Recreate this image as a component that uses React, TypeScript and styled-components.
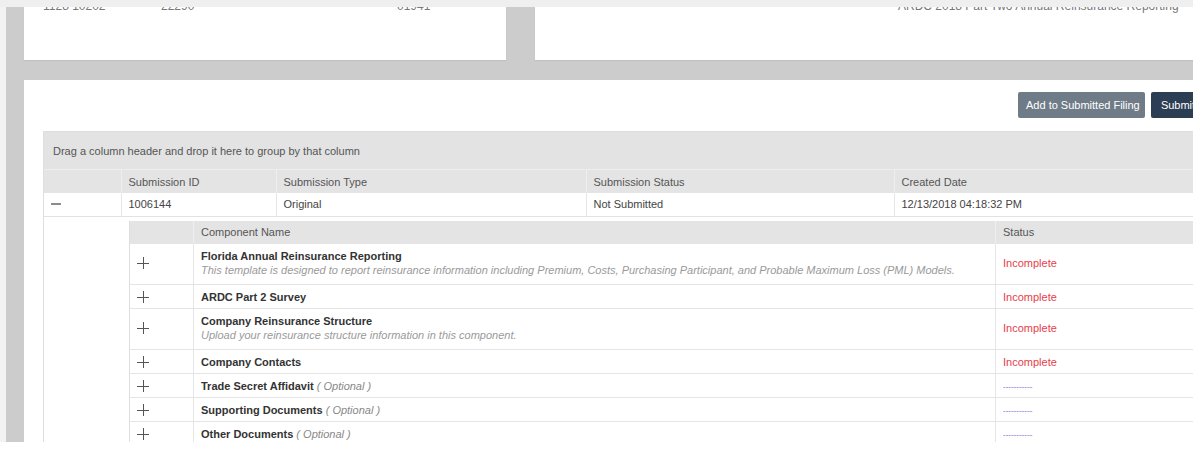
import styled, { createGlobalStyle } from "styled-components";

const GlobalStyle = createGlobalStyle`
  html, body {
    margin: 0;
    padding: 0;
    background: #ffffff;
    overflow: hidden;
  }
  body {
    font-family: "Liberation Sans", Arial, sans-serif;
    font-size: 11px;
    color: #444;
  }
`

const Page = styled.div`
  width: 1193px;
  height: 454px;
  overflow: hidden;
  background: #ffffff;
`

const TopBar = styled.div`
  height: 7px;
  background: #efefef;
`

const Shell = styled.div`
  display: flex;
  height: 435px;
  overflow: hidden;
`

const Gutter = styled.div`
  flex: none;
  width: 6px;
  background: #f3f3f3;
`

const Stage = styled.div`
  flex: none;
  width: 1218px;
  padding-left: 18px;
  box-sizing: border-box;
  background: #cccccc;
  display: flex;
  flex-direction: column;
  gap: 20px;
`

const CardRow = styled.div`
  flex: none;
  display: grid;
  grid-template-columns: 482px 1fr;
  column-gap: 29px;
  height: 53px;
`

const Card = styled.div<{ $indent: number }>`
  background: #ffffff;
  overflow: hidden;
  padding-left: ${p => p.$indent}px;
  box-shadow: 0 1px 1px rgba(0, 0, 0, 0.06);
`

const CardLine = styled.div<{ $cols: string }>`
  display: grid;
  grid-template-columns: ${p => p.$cols};
  margin-top: -8px;
  line-height: 14px;
  font-size: 12px;
  color: #777;
`

const Panel = styled.div`
  flex: 1;
  min-height: 0;
  overflow: hidden;
  background: #ffffff;
  padding: 12px 19px 0 19px;
  display: flex;
  flex-direction: column;
`

const Actions = styled.div`
  flex: none;
  display: flex;
  justify-content: flex-end;
  gap: 6px;
  height: 26px;
`

const Button = styled.button<{ $tone: "muted" | "dark" }>`
  border: none;
  border-radius: 2px;
  padding: 0 8px;
  font-family: "Liberation Sans", Arial, sans-serif;
  font-size: 11px;
  white-space: nowrap;
  color: #ffffff;
  background: ${p => (p.$tone === "dark" ? "#2c3e54" : "#6f7c88")};
  width: ${p => (p.$tone === "dark" ? "54px" : "127px")};
  cursor: pointer;
`

const Grid = styled.div`
  flex: none;
  margin-top: 13px;
  border: 1px solid #dedede;
  border-right: none;
  border-bottom: none;
`

const GroupPanel = styled.div`
  height: 37px;
  display: flex;
  align-items: center;
  padding-left: 9px;
  background: #e3e3e3;
  color: #555;
  border-bottom: 1px solid #eeeeee;
`

const Table = styled.table`
  width: 100%;
  table-layout: fixed;
  border-collapse: collapse;
`

const HeadCell = styled.th<{ $first?: boolean }>`
  height: 23px;
  padding: 0 7px;
  text-align: left;
  font-weight: normal;
  color: #555;
  background: #e4e4e4;
  border-left: ${p => (p.$first ? "none" : "1px solid #efefef")};
  box-sizing: border-box;
`

const Cell = styled.td<{ $first?: boolean }>`
  height: 23px;
  padding: 0 7px;
  color: #444;
  background: #ffffff;
  border-left: ${p => (p.$first ? "none" : "1px solid #e6e6e6")};
  border-bottom: 1px solid #e2e2e2;
  box-sizing: border-box;
`

const DetailCell = styled.td`
  padding: 4px 0 0 8px;
  vertical-align: top;
`

const SubTable = styled.table`
  width: 100%;
  table-layout: fixed;
  border-collapse: collapse;
  border-left: 1px solid #dedede;
`

const SubHead = styled.th<{ $first?: boolean }>`
  height: 23px;
  padding: 0 7px;
  text-align: left;
  font-weight: normal;
  color: #555;
  background: #e4e4e4;
  border-left: ${p => (p.$first ? "none" : "1px solid #efefef")};
  box-sizing: border-box;
`

const SubCell = styled.td<{ $tall?: boolean; $first?: boolean }>`
  height: ${p => (p.$tall ? "41px" : "24px")};
  padding: ${p => (p.$tall ? "0 7px 2px 7px" : "0 7px")};
  border-left: ${p => (p.$first ? "none" : "1px solid #e6e6e6")};
  border-bottom: 1px solid #e4e4e4;
  box-sizing: border-box;
  line-height: 14px;
`

const Title = styled.span`
  font-weight: bold;
  color: #333;
`

const Optional = styled.span`
  font-style: italic;
  color: #888;
`

const Description = styled.div`
  font-style: italic;
  color: #9a9a9a;
`

const Status = styled.span<{ $done: boolean }>`
  color: ${p => (p.$done ? "#6b63d8" : "#e8404a")};
  font-size: ${p => (p.$done ? "8px" : "11px")};
`

const ToggleIcon = ({ open }: { open?: boolean }) => (
  <svg width="12" height="12" viewBox="0 0 12 12" style={{ display: "block" }}>
    {open ? (
      <line x1="0" y1="6" x2="10" y2="6" stroke="#666" strokeWidth="1.5" />
    ) : (
      <>
        <line x1="0" y1="6.5" x2="12" y2="6.5" stroke="#555" strokeWidth="1" />
        <line x1="6.5" y1="0" x2="6.5" y2="12" stroke="#555" strokeWidth="1" />
      </>
    )}
  </svg>
)

interface Component {
  name: string;
  description?: string;
  optional?: boolean;
  status: string;
}

const components: Component[] = [
  {
    name: "Florida Annual Reinsurance Reporting",
    description:
      "This template is designed to report reinsurance information including Premium, Costs, Purchasing Participant, and Probable Maximum Loss (PML) Models.",
    status: "Incomplete",
  },
  { name: "ARDC Part 2 Survey", status: "Incomplete" },
  {
    name: "Company Reinsurance Structure",
    description: "Upload your reinsurance structure information in this component.",
    status: "Incomplete",
  },
  { name: "Company Contacts", status: "Incomplete" },
  { name: "Trade Secret Affidavit", optional: true, status: "-----------" },
  { name: "Supporting Documents", optional: true, status: "-----------" },
  { name: "Other Documents", optional: true, status: "-----------" },
]

const App = () => {
  return (
    <Page>
      <GlobalStyle />
      <TopBar />
      <Shell>
        <Gutter />
        <Stage>
          <CardRow>
            <Card $indent={19}>
              <CardLine $cols="118px 236px 1fr">
                <span>1128 10202</span>
                <span>22290</span>
                <span>01941</span>
              </CardLine>
            </Card>
            <Card $indent={363}>
              <CardLine $cols="1fr">
                <span>ARDC 2018 Part Two Annual Reinsurance Reporting</span>
              </CardLine>
            </Card>
          </CardRow>

          <Panel>
            <Actions>
              <Button $tone="muted">Add to Submitted Filing</Button>
              <Button $tone="dark">Submit</Button>
            </Actions>

            <Grid>
              <GroupPanel>Drag a column header and drop it here to group by that column</GroupPanel>
              <Table>
                <colgroup>
                  <col style={{ width: 77 }} />
                  <col style={{ width: 155 }} />
                  <col style={{ width: 310 }} />
                  <col style={{ width: 308 }} />
                  <col />
                </colgroup>
                <thead>
                  <tr>
                    <HeadCell $first />
                    <HeadCell>Submission ID</HeadCell>
                    <HeadCell>Submission Type</HeadCell>
                    <HeadCell>Submission Status</HeadCell>
                    <HeadCell>Created Date</HeadCell>
                  </tr>
                </thead>
                <tbody>
                  <tr>
                    <Cell $first>
                      <ToggleIcon open />
                    </Cell>
                    <Cell>1006144</Cell>
                    <Cell>Original</Cell>
                    <Cell>Not Submitted</Cell>
                    <Cell>12/13/2018 04:18:32 PM</Cell>
                  </tr>
                  <tr>
                    <td />
                    <DetailCell colSpan={4}>
                      <SubTable>
                        <colgroup>
                          <col style={{ width: 64 }} />
                          <col style={{ width: 802 }} />
                          <col />
                        </colgroup>
                        <thead>
                          <tr>
                            <SubHead $first />
                            <SubHead>Component Name</SubHead>
                            <SubHead>Status</SubHead>
                          </tr>
                        </thead>
                        <tbody>
                          {components.map(c => (
                            <tr key={c.name}>
                              <SubCell $first $tall={!!c.description}>
                                <ToggleIcon />
                              </SubCell>
                              <SubCell $tall={!!c.description}>
                                <Title>{c.name}</Title>
                                {c.optional && <Optional> ( Optional )</Optional>}
                                {c.description && <Description>{c.description}</Description>}
                              </SubCell>
                              <SubCell $tall={!!c.description}>
                                <Status $done={c.status !== "Incomplete"}>{c.status}</Status>
                              </SubCell>
                            </tr>
                          ))}
                        </tbody>
                      </SubTable>
                    </DetailCell>
                  </tr>
                </tbody>
              </Table>
            </Grid>
          </Panel>
        </Stage>
      </Shell>
    </Page>
  )
}

export default App;
